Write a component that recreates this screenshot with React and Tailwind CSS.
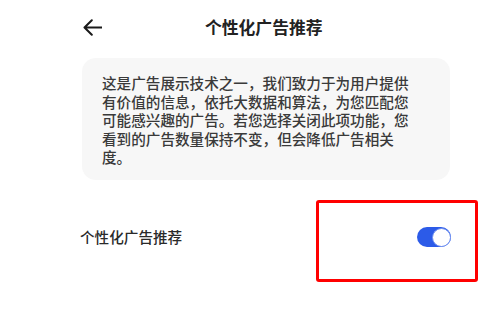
export default function App() {
  return (
    <div
      className="relative w-[500px] h-[325px] overflow-hidden bg-white"
      style={{ fontFamily: '"Noto Sans CJK SC", "Noto Sans", sans-serif' }}
    >
      <div className="flex h-[54px] items-center pl-[83px]">
        <svg width="19" height="17" viewBox="0 0 19 17" fill="none" className="shrink-0">
          <path d="M18.5 8.5H1.8M8.8 1.2L1.5 8.5L8.8 15.8" stroke="#1a1a1a" strokeWidth="2" strokeLinecap="round" strokeLinejoin="round" />
        </svg>
        <div className="ml-[103px] text-[16.8px] font-bold leading-none text-[#222]">个性化广告推荐</div>
      </div>
      <div className="ml-[82px] mt-[4px] h-[122px] w-[368px] rounded-[14px] bg-[#f7f7f7] pl-[20px] pt-[16px]">
        <p className="w-[310px] text-[14.6px] leading-[18.6px] font-medium text-[#3a3a3a]">
          这是广告展示技术之一，我们致力于为用户提供有价值的信息，依托大数据和算法，为您匹配您可能感兴趣的广告。若您选择关闭此项功能，您看到的广告数量保持不变，但会降低广告相关度。
        </p>
      </div>
      <div className="ml-[80px] mt-[37px] flex h-[40px] w-[371px] items-center justify-between">
        <span className="text-[14.6px] font-medium text-[#2a2a2a]">个性化广告推荐</span>
        <div className="flex h-[20px] w-[34px] items-center justify-end rounded-full bg-[#2c5be8]">
          <div className="h-[19px] w-[19px] rounded-full border border-[#6f8ff0] bg-white" />
        </div>
      </div>
      <div className="absolute left-[316px] top-[200px] h-[82px] w-[162px] rounded-[3px] border-[3px] border-[#ff0000]" />
    </div>
  );
}
